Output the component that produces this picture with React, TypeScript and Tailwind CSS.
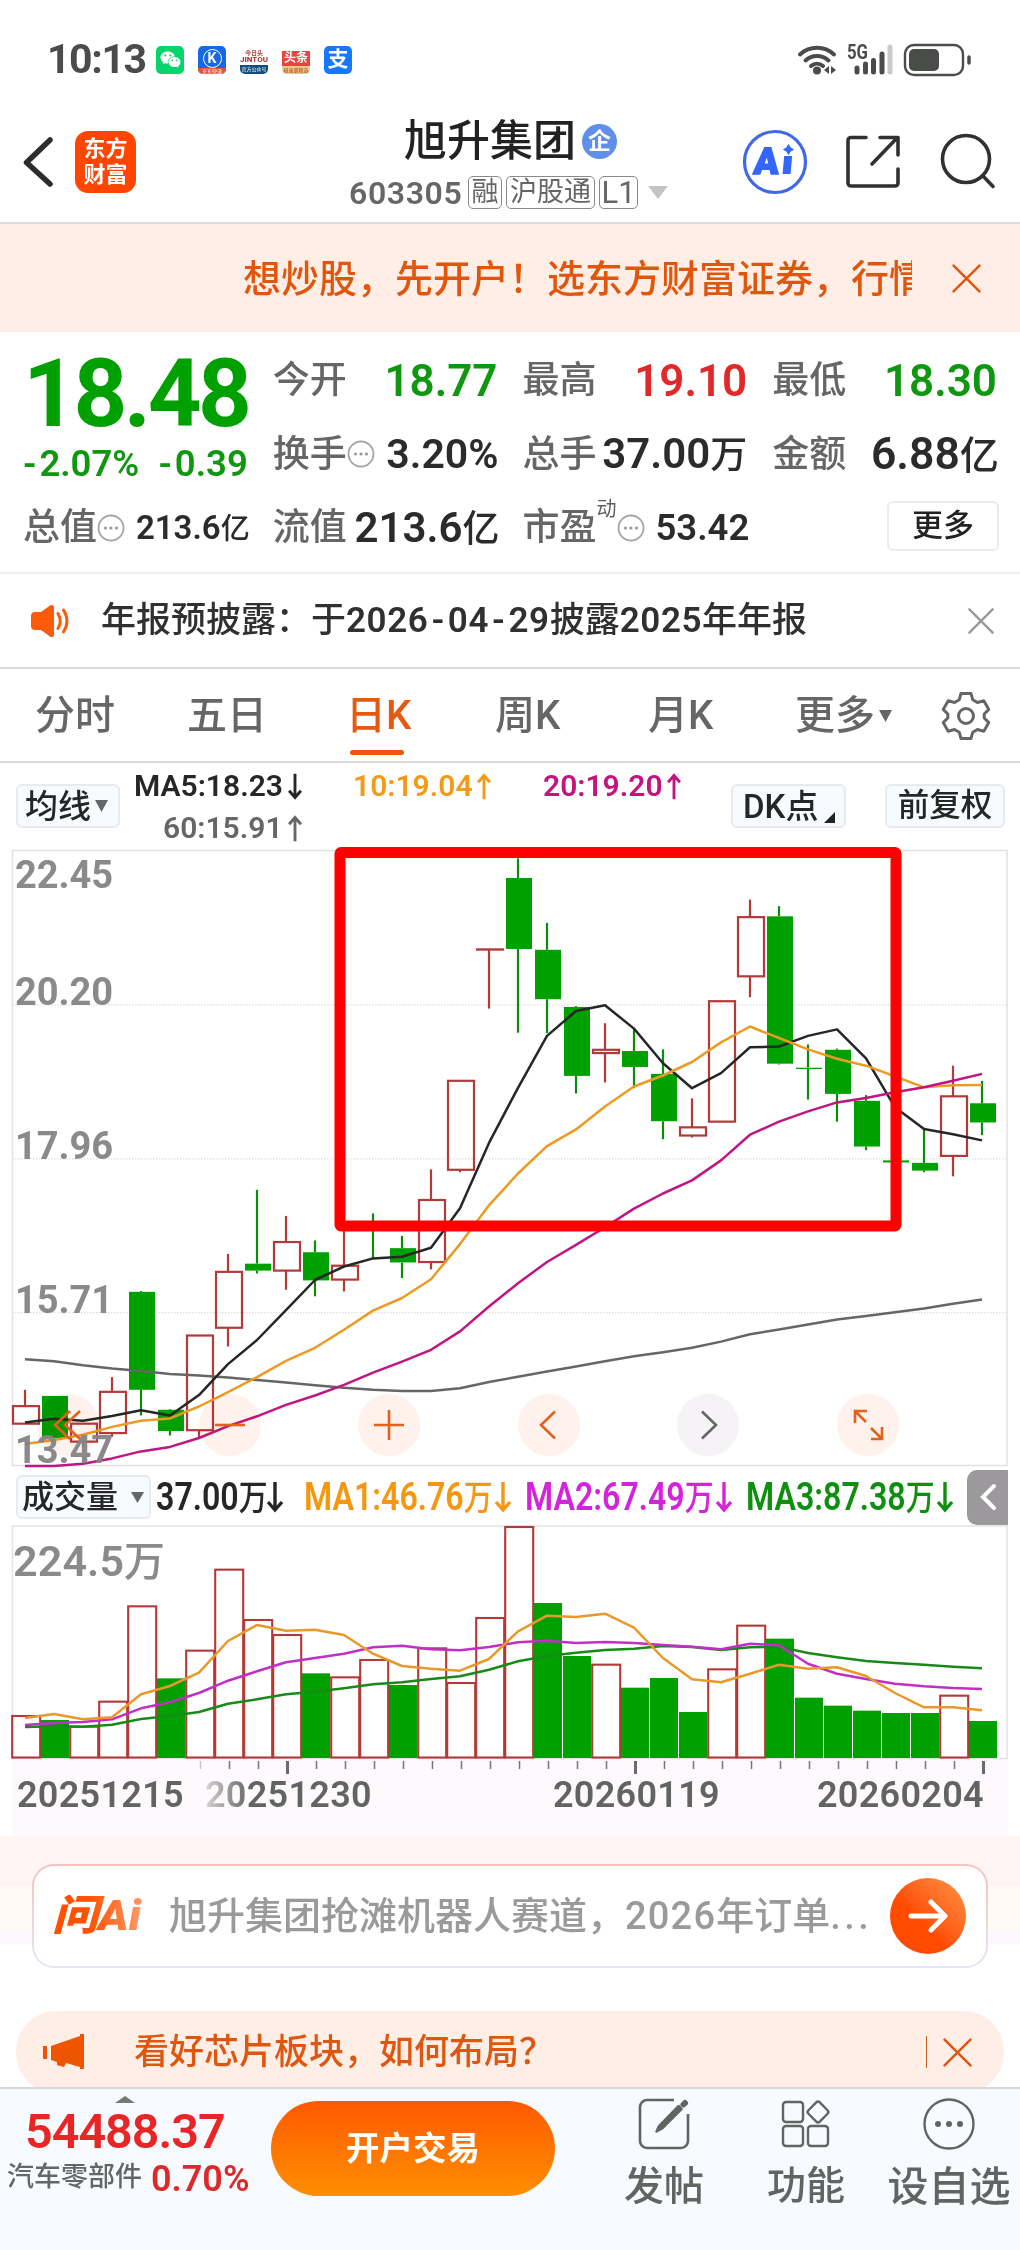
import React from 'react';
import { AiFillWechat } from 'react-icons/ai';

type Kind = 'up' | 'down';

// [kind, high, bodyTop, bodyBottom, low]
type Candle = [Kind, number, number, number, number];

const CANDLES: Candle[] = [
  ['up', 1347, 1387, 1430, 1430],
  ['down', 1362, 1362, 1465, 1465],
  ['up', 1430, 1430, 1474, 1490],
  ['up', 1316, 1352, 1453, 1462],
  ['down', 1105, 1107, 1347, 1410],
  ['down', 1394, 1396, 1448, 1459],
  ['up', 1214, 1214, 1446, 1465],
  ['up', 1014, 1058, 1195, 1241],
  ['down', 857, 1038, 1055, 1062],
  ['up', 921, 985, 1055, 1102],
  ['down', 981, 1010, 1079, 1118],
  ['up', 945, 1043, 1077, 1106],
  ['down', 915, 940, 955, 1025],
  ['down', 970, 1000, 1035, 1073],
  ['up', 807, 882, 1034, 1052],
  ['up', 590, 590, 808, 814],
  ['up', 268, 268, 268, 413],
  ['down', 45, 93, 267, 472],
  ['down', 203, 269, 390, 473],
  ['down', 407, 409, 578, 621],
  ['up', 449, 514, 522, 594],
  ['down', 460, 517, 556, 608],
  ['down', 513, 573, 689, 733],
  ['up', 633, 704, 724, 729],
  ['up', 395, 395, 690, 690],
  ['up', 146, 189, 334, 385],
  ['down', 162, 187, 548, 550],
  ['down', 501, 558, 561, 636],
  ['down', 511, 514, 622, 690],
  ['down', 625, 639, 751, 760],
  ['down', 780, 785, 790, 795],
  ['down', 705, 791, 810, 814],
  ['up', 553, 628, 774, 824],
  ['down', 590, 645, 692, 723],
];

const PRICE_LINES = [
  {
    color: '#666666',
    points: [1272, 1277, 1287, 1295, 1301, 1308, 1312, 1317, 1323, 1329, 1336, 1342, 1347, 1350, 1350, 1343, 1328, 1315, 1302, 1290, 1277, 1265, 1255, 1244, 1229, 1211, 1199, 1187, 1175, 1166, 1157, 1148, 1136, 1126],
  },
  {
    color: '#262626',
    points: [1427, 1418, 1423, 1411, 1397, 1410, 1360, 1284, 1225, 1152, 1078, 1045, 1025, 1021, 999, 902, 742, 607, 480, 419, 405, 462, 547, 608, 571, 508, 506, 480, 464, 535, 655, 708, 721, 736],
  },
  {
    color: '#ed9a22',
    points: [1480, 1470, 1457, 1438, 1423, 1417, 1388, 1353, 1316, 1276, 1244, 1200, 1153, 1122, 1076, 990, 895, 817, 750, 709, 653, 604, 577, 544, 496, 457, 485, 513, 536, 553, 579, 606, 601, 600],
  },
  {
    color: '#c01582',
    points: [1534, 1534, 1528, 1515, 1498, 1487, 1465, 1436, 1412, 1384, 1361, 1335, 1305, 1278, 1249, 1204, 1143, 1086, 1034, 992, 949, 903, 866, 834, 785, 722, 690, 665, 643, 632, 618, 606, 590, 573],
  },
];

const VOLUME_TOPS = [768, 780, 800, 725, 439, 655, 572, 329, 480, 525, 640, 652, 600, 675, 565, 669, 474, 201, 429, 588, 614, 683, 654, 756, 628, 497, 536, 713, 737, 752, 759, 759, 707, 783];

const FILLED_VOLUMES = [1, 5, 10, 13, 18, 19, 21, 22, 23, 26, 27, 28, 29, 30, 31, 33];

const VOLUME_LINES = [
  {
    color: '#178a17',
    points: [801, 799, 800, 794, 777, 768, 756, 731, 718, 703, 695, 685, 673, 667, 657, 649, 629, 604, 588, 578, 570, 566, 558, 561, 570, 562, 560, 579, 592, 603, 609, 614, 620, 625],
  },
  {
    color: '#c22fc6',
    points: [795, 789, 786, 778, 745, 727, 699, 662, 634, 607, 594, 581, 562, 557, 568, 571, 561, 547, 542, 549, 546, 549, 555, 560, 568, 551, 556, 611, 641, 657, 671, 679, 684, 687],
  },
  {
    color: '#e8992a',
    points: [774, 762, 778, 772, 703, 678, 638, 543, 495, 512, 509, 525, 581, 618, 626, 632, 597, 514, 467, 471, 461, 503, 594, 658, 667, 641, 614, 626, 622, 648, 699, 742, 742, 751],
  },
];

const GREEN = '#00a000';
const RED = '#b23a38';
const FONT = 'Roboto, "Noto Sans CJK SC", sans-serif';

const cx = (i: number) => 25 + i * 29;
const priceY = (v: number) => v / 2.45 - 6;
const volumeY = (v: number) => v / 3 - 64;

const toPath = (points: number[], y: (v: number) => number) =>
  points.map((v, i) => `${cx(i)},${y(v).toFixed(1)}`).join(' ');

const AXIS_LABELS = [
  { text: '22.45', y: 42 },
  { text: '20.20', y: 159 },
  { text: '17.96', y: 313 },
  { text: '15.71', y: 467 },
  { text: '13.47', y: 617 },
];

const PriceChart = () => (
  <svg width="1020" height="624" viewBox="0 0 1020 624" className="block">
    <rect x="12.5" y="4.5" width="994.5" height="615" fill="none" stroke="#e3e3e3" strokeWidth="1.6" />
    {[404, 781, 1158].map((v) => (
      <line key={v} x1="12" x2="1008" y1={priceY(v)} y2={priceY(v)} stroke="#dedede" strokeWidth="1.2" strokeDasharray="1.5 1.5" />
    ))}
    {CANDLES.map(([kind, high, top, bottom, low], i) => {
      const x = cx(i);
      const color = kind === 'up' ? RED : '#0c8c0c';
      return (
        <g key={i}>
          <line x1={x} x2={x} y1={priceY(high)} y2={priceY(top)} stroke={color} strokeWidth="2.2" />
          <line x1={x} x2={x} y1={priceY(bottom)} y2={priceY(low)} stroke={color} strokeWidth="2.2" />
          {kind === 'up' ? (
            <rect
              x={x - 12}
              y={priceY(top)}
              width="26"
              height={Math.max(priceY(bottom) - priceY(top), 0.2)}
              fill="none"
              stroke={RED}
              strokeWidth="2.2"
            />
          ) : (
            <rect x={x - 12} y={priceY(top)} width="26" height={priceY(bottom) - priceY(top)} fill={GREEN} />
          )}
        </g>
      );
    })}
    {PRICE_LINES.map((l) => (
      <polyline key={l.color} points={toPath(l.points, priceY)} fill="none" stroke={l.color} strokeWidth="2.5" strokeLinejoin="round" />
    ))}
    <rect x="340" y="6.5" width="556" height="373.5" rx="1" fill="none" stroke="#fe0000" strokeWidth="11" strokeLinejoin="round" />
  </svg>
);

const AxisLabels = () => (
  <svg width="140" height="624" viewBox="0 0 140 624" className="absolute left-0 top-0">
    {AXIS_LABELS.map((l) => (
      <text key={l.text} x="15" y={l.y} fontSize="38" fontWeight="700" fontFamily={FONT} fill="#858385" fillOpacity="0.95" textLength="98">
        {l.text}
      </text>
    ))}
  </svg>
);

const VolumeChart = () => (
  <svg width="1020" height="236" viewBox="0 0 1020 236" className="block">
    <rect x="12.5" y="2" width="994.5" height="232.5" fill="none" stroke="#e3e3e3" strokeWidth="1.6" />
    {VOLUME_TOPS.map((v, i) => {
      const x = cx(i);
      const h = volumeY(894) - volumeY(v);
      return FILLED_VOLUMES.includes(i) ? (
        <rect key={i} x={x - 13} y={volumeY(v)} width="28" height={h} fill={GREEN} />
      ) : (
        <rect key={i} x={x - 12.8} y={volumeY(v)} width="28" height={h - 0.5} fill="none" stroke={RED} strokeWidth="2.1" />
      );
    })}
    {VOLUME_LINES.map((l) => (
      <polyline key={l.color} points={toPath(l.points, volumeY)} fill="none" stroke={l.color} strokeWidth="2.5" strokeLinejoin="round" />
    ))}
    <text x="13" y="52" fontSize="43" fontWeight="500" fontFamily={FONT} fill="#8b898b">
      <tspan fontWeight="600" textLength="111">224.5</tspan>
      <tspan fontSize="41">万</tspan>
    </text>
  </svg>
);

const Ticks = () => (
  <svg width="1020" height="18" viewBox="0 0 1020 18" className="block">
    {CANDLES.map((_, i) => {
      if (i < 6) return null;
      const major = i % 12 === 9;
      return (
        <line
          key={i}
          x1={cx(i) + 1.5}
          x2={cx(i) + 1.5}
          y1="1"
          y2={major ? 14 : 9}
          stroke={major ? '#6b6b6b' : '#777777'}
          strokeOpacity={i === 6 ? 0.4 : 1}
          strokeWidth={major ? 3 : 1.5}
        />
      );
    })}
  </svg>
);

const Cross = ({ size, color, width }: { size: number; color: string; width: number }) => (
  <svg width={size} height={size} viewBox="0 0 28 28" fill="none" stroke={color} strokeWidth={width} strokeLinecap="round">
    <path d="M1.5 1.5l25 25M26.5 1.5l-25 25" />
  </svg>
);

const Dots = () => (
  <svg width="28" height="28" viewBox="0 0 28 28" fill="none" className="shrink-0">
    <circle cx="14" cy="14" r="12.5" stroke="#a5a5a5" strokeWidth="1.8" />
    <circle cx="8.5" cy="14" r="1.6" fill="#999" />
    <circle cx="14" cy="14" r="1.6" fill="#999" />
    <circle cx="19.5" cy="14" r="1.6" fill="#999" />
  </svg>
);

const Arrow = ({ up, className }: { up?: boolean; className?: string }) => (
  <svg width="18" height="32" viewBox="0 0 18 32" fill="none" stroke="currentColor" strokeWidth="3.4" className={className}>
    {up ? <path d="M9 31V3M2 11l7-8 7 8" /> : <path d="M9 1v28M2 21l7 8 7-8" />}
  </svg>
);

const StatusBar = () => (
  <div className="flex h-[90px] items-center pt-[29px]">
    <span className="ml-[47px] w-[109px] text-[41px] font-bold leading-none tracking-[-1.4px] text-[#4a4c49]">10:13</span>
    <div className="flex gap-[14px]">
      <div className="flex h-7 w-7 items-center justify-center rounded-[5px] bg-[#05d56a] text-white">
        <AiFillWechat size={23} />
      </div>
      <div className="relative flex h-7 w-7 justify-center overflow-hidden rounded-[5px] bg-[#1668e3] pt-[3px]">
        <div className="flex h-[19px] w-[19px] items-center justify-center rounded-full border border-white text-[14px] font-bold leading-none text-white">K</div>
        <div className="absolute bottom-0 left-0 h-[6px] w-full bg-[#e0523a] text-center text-[5px] leading-[6px] text-white">京东快递</div>
      </div>
      <div className="flex h-7 w-7 flex-col overflow-hidden rounded-[5px] text-center">
        <div className="h-[9px] pt-[4px] text-[6px] font-bold leading-[6px] text-[#b5413a]">今日头</div>
        <div className="h-[10px] text-[8px] font-bold leading-[10px] text-[#a8302a]">JINTOU</div>
        <div className="h-[9px] bg-[#124a80] text-[5px] leading-[9px] text-white">官方公众号</div>
      </div>
      <div className="flex h-7 w-7 flex-col pt-[5px] text-center">
        <div className="h-[15px] bg-[#e8443f] text-[12px] font-bold leading-[15px] text-white">头条</div>
        <div className="h-[8px] rounded-b-[5px] bg-[#f3c98c] text-[5px] leading-[8px] text-[#8a4a1a]">极速版精选</div>
      </div>
      <div className="flex h-7 w-7 items-center justify-center rounded-[5px] bg-[#1677ff] text-[21px] font-bold leading-none text-white">支</div>
    </div>
    <svg width="176" height="38" viewBox="0 -2 176 38" fill="none" className="ml-[445px]">
      <g stroke="#4a4c49" strokeWidth="4" strokeLinecap="round">
        <path d="M3 11.5a25 25 0 0 1 34 0M8.5 17.5a17 17 0 0 1 23 0M14 23a9.500 9.500 0 0 1 12 0" />
      </g>
      <circle cx="20" cy="27.500" r="4" fill="#4a4c49" />
      <path d="M32 23v8l-5-4zM34 23v8l5-4z" fill="#4a4c49" />
      <text x="50" y="16" fontSize="20.500" fontWeight="700" fontFamily={FONT} fill="#4a4c49" textLength="21" lengthAdjust="spacingAndGlyphs">5G</text>
      <g stroke="#4a4c49" strokeWidth="5" strokeLinecap="round">
        <path d="M60 25v4M68.500 21v8M76.500 17.500v11.500M85 11v18" />
        <path d="M93 4v25" stroke="#cbc9cc" />
      </g>
      <rect x="108" y="2" width="58" height="30" rx="9" stroke="#4a4c49" strokeWidth="2.400" />
      <rect x="112" y="6" width="30" height="22" rx="5" fill="#4a4c49" />
      <path d="M172 14v6" stroke="#4a4c49" strokeWidth="3.500" strokeLinecap="round" />
    </svg>
  </div>
);

const Tag = ({ className, children }: { className: string; children: React.ReactNode }) => (
  <span className={`flex h-[33px] items-center justify-center rounded-[5px] border-[1.500px] border-[#8a8a8a] leading-none text-[#666] ${className}`}>{children}</span>
);

const Header = () => (
  <header className="flex h-[134px] items-center border-b-2 border-[#dcdcdc] pt-[11px]">
    <svg width="32" height="52" viewBox="0 0 32 52" fill="none" className="ml-[22px]">
      <path d="M28 4L4.500 26.500 28 48" stroke="#2b2d2b" strokeWidth="5.500" strokeLinecap="round" strokeLinejoin="round" />
    </svg>
    <div className="ml-[21px] flex h-[62px] w-[61px] flex-col items-center justify-center rounded-[13px] bg-[#ff4500] text-[22px] font-bold leading-[26px] text-white">
      <span>东方</span>
      <span>财富</span>
    </div>
    <div className="ml-[213px] w-[330px]">
      <div className="ml-[55px] flex items-center gap-[6px]">
        <h1 className="text-[43px] font-medium leading-[54px] text-[#222]">旭升集团</h1>
        <span className="flex h-[35px] w-[35px] items-center justify-center rounded-full bg-[#5f8fe8] text-[23px] font-bold leading-none text-white">企</span>
      </div>
      <div className="mt-[8px] flex items-center">
        <span className="w-[119px] text-[32px] font-semibold leading-none tracking-[0.600px] text-[#666]">603305</span>
        <Tag className="w-[34px] text-[27px]">融</Tag>
        <Tag className="ml-[4px] w-[89px] text-[27px]">沪股通</Tag>
        <Tag className="ml-[4px] w-[39px] text-[31px]">L1</Tag>
        <svg width="20" height="13" viewBox="0 0 20 13" className="ml-[10px]">
          <path d="M0 0h20L10 13z" fill="#c4c4c4" />
        </svg>
      </div>
    </div>
    <svg width="66" height="66" viewBox="0 0 66 66" fill="none" className="ml-[63px]">
      <circle cx="33" cy="33" r="30.500" stroke="#4169e1" strokeWidth="3.200" />
      <g transform="translate(0 0) skewX(-5)">
        <text x="15" y="45" fontSize="37" fontWeight="900" fontFamily={FONT} fill="#3366ff" stroke="#3366ff" strokeWidth="1.600" textLength="25" lengthAdjust="spacingAndGlyphs">A</text>
        <path d="M44.500 27h8v18h-8z" fill="#3366ff" />
      </g>
      <path d="M46.500 15.500q1.200 4 5 5-3.800 1-5 5-1.200-4-5-5 3.800-1 5-5z" fill="#3366ff" stroke="#3366ff" />
    </svg>
    <svg width="54" height="54" viewBox="0 0 54 54" fill="none" stroke="#303230" strokeWidth="3.600" strokeLinecap="round" strokeLinejoin="round" className="ml-[38px]">
      <path d="M20 2.500H5A3 3 0 0 0 2 5.500V48a3 3 0 0 0 3 3H49a3 3 0 0 0 3-3V34M34 2.500H52V20M51 3L26 29" />
    </svg>
    <svg width="58" height="58" viewBox="0 0 58 58" fill="none" stroke="#303230" strokeWidth="3.600" strokeLinecap="round" className="ml-[39px]">
      <circle cx="27" cy="26" r="23.500" />
      <path d="M44 43l10 10.500" />
    </svg>
  </header>
);

const PromoBar = () => (
  <div className="flex h-[108px] items-center bg-[#ffeee6]">
    <div className="ml-[243px] w-[669px] overflow-hidden whitespace-nowrap pt-[2px] text-[38px] font-medium leading-[56px] text-[#e0560c]">
      想炒股，先开户！选东方财富证券，行情
    </div>
    <div className="ml-[40px]">
      <Cross size={29} color="#e0560c" width={2.4} />
    </div>
  </div>
);

const Label = ({ children }: { children: React.ReactNode }) => (
  <span className="text-[37px] font-medium leading-none text-[#666]">{children}</span>
);

const Unit = ({ children }: { children: React.ReactNode }) => <span className="text-[0.880em] font-medium">{children}</span>;

const Quote = () => (
  <section className="grid h-[242px] grid-cols-4 grid-rows-[73.500px_73.500px_73.500px] gap-x-[25px] border-b-2 border-[#eeeeee] px-[23px] pt-[12px] text-[#2b2b2b]">
    <div className="row-span-2 flex flex-col">
      <span className="mt-[2px] text-[94px] font-bold leading-[96px] tracking-[-3.500px] text-[#00a000]">18.48</span>
      <div className="mt-[4px] flex justify-between text-[36.500px] font-semibold leading-none text-[#0f970f]">
        <span><span className="pr-[3px]">-</span>2.07%</span>
        <span><span className="pr-[3px]">-</span>0.39</span>
      </div>
    </div>
    <div className="flex items-center justify-between">
      <Label>今开</Label>
      <span className="text-[44px] font-semibold leading-none text-[#0f970f]">18.77</span>
    </div>
    <div className="flex items-center justify-between">
      <Label>最高</Label>
      <span className="text-[44px] font-semibold leading-none text-[#e02a2a]">19.10</span>
    </div>
    <div className="flex items-center justify-between">
      <Label>最低</Label>
      <span className="text-[44px] font-semibold leading-none text-[#0f970f]">18.30</span>
    </div>
    <div className="flex items-center justify-between">
      <div className="flex items-center">
        <Label>换手</Label>
        <Dots />
      </div>
      <span className="-mr-[1px] text-[41px] font-semibold leading-none">3.20%</span>
    </div>
    <div className="flex items-center justify-between">
      <Label>总手</Label>
      <span className="text-[42px] font-semibold leading-none">37.00<Unit>万</Unit></span>
    </div>
    <div className="flex items-center justify-between">
      <Label>金额</Label>
      <span className="-mr-[2px] text-[44.500px] font-semibold leading-none">6.88<Unit>亿</Unit></span>
    </div>
    <div className="flex items-center justify-between">
      <div className="flex items-center">
        <Label>总值</Label>
        <Dots />
      </div>
      <span className="-mr-[2px] text-[33px] font-semibold leading-none">213.6<Unit>亿</Unit></span>
    </div>
    <div className="flex items-center justify-between">
      <Label>流值</Label>
      <span className="-mr-[2px] text-[42px] font-semibold leading-none">213.6<Unit>亿</Unit></span>
    </div>
    <div className="flex items-center justify-between">
      <div className="flex items-center">
        <Label>市盈</Label>
        <span className="-mt-[38px] text-[20px] leading-none text-[#5f5f5f]">动</span>
        <Dots />
      </div>
      <span className="-mr-[2px] text-[36.500px] font-semibold leading-none">53.42</span>
    </div>
    <div className="flex items-center justify-end">
      <button className="-mr-[2px] -mt-[4px] h-[50px] w-[112px] rounded-[6px] border-2 border-[#ebebeb] text-[31px] font-medium leading-none text-[#222]">更多</button>
    </div>
  </section>
);

const Announcement = () => (
  <div className="flex h-[95px] items-center border-b-2 border-[#d9d9d9]">
    <svg width="42" height="34" viewBox="0 0 42 34" fill="none" className="ml-[29px]">
      <path d="M2 12a4 4 0 0 1 4-4h6L21 1.500c2-1.300 4-.5 4 2v27c0 2.500-2 3.300-4 2L12 26H6a4 4 0 0 1-4-4z" fill="#fb5a0a" />
      <path d="M29 9.500q4.500 7.500 0 15M34.500 6q7 11 0 22" stroke="#fb5a0a" strokeWidth="3" strokeLinecap="round" />
    </svg>
    <p className="ml-[30px] w-[867px] whitespace-nowrap text-[35px] font-medium leading-none text-[#303030]">
      年报预披露：于
      <span className="font-semibold tracking-[0.600px]">
        2026<span className="px-[3px]">-</span>04<span className="px-[3px]">-</span>29
      </span>
      披露<span className="font-semibold tracking-[0.600px]">2025</span>年年报
    </p>
    <Cross size={26} color="#9a9a9a" width={2.6} />
  </div>
);

const TABS = [
  { label: '分时', className: 'ml-[35px] w-[152px]' },
  { label: '五日', className: 'w-[159px]' },
  { label: '日K', className: 'w-[149px]', active: true },
  { label: '周K', className: 'w-[153px]' },
  { label: '月K', className: 'w-[147px]' },
  { label: '更多', className: 'w-[84px]' },
];

const Tabs = () => (
  <nav className="flex h-[94px] items-center border-b-2 border-[#d9d9d9] pt-[1px] text-[40px] font-medium leading-none text-[#666]">
    {TABS.map((t) => (
      <div key={t.label} className={t.className}>
        {t.active ? (
          <span className="relative text-[#e55a0f]">
            {t.label}
            <i className="absolute -bottom-[16px] left-[4px] h-[5px] w-[54px] rounded-full bg-[#e55a0f]" />
          </span>
        ) : (
          t.label
        )}
      </div>
    ))}
    <svg width="13" height="12" viewBox="0 0 13 12">
      <path d="M0 0h13L6.500 12z" fill="#666" />
    </svg>
    <svg width="50" height="50" viewBox="0 0 50 50" fill="none" stroke="#666" strokeWidth="3" strokeLinejoin="round" className="ml-[49px]">
      <path d="M20 2.500h10l1.800 6.300 4.600 2.700 6.400-1.700 5 8.600-4.600 4.600v4l4.600 4.600-5 8.600-6.400-1.700-4.600 2.700L30 47.500H20l-1.800-6.300-4.600-2.700-6.400 1.700-5-8.600L6.800 27v-4l-4.600-4.600 5-8.600 6.400 1.700 4.600-2.700z" />
      <circle cx="25" cy="25" r="7.500" />
    </svg>
  </nav>
);

const Chip = ({ className, children }: { className: string; children: React.ReactNode }) => (
  <div className={`flex h-[44px] shrink-0 items-center whitespace-nowrap rounded-[6px] border-2 border-[#e8eaf0] bg-[#f7faff] font-medium leading-none text-[#262626] ${className}`}>
    {children}
  </div>
);

const MaRow = () => (
  <div className="flex h-[83px] items-start">
    <Chip className="ml-[16px] mt-[21px] w-[104px] pl-[7px] text-[33px]">
      均线
      <svg width="13" height="12" viewBox="0 0 13 12" className="ml-[4px]">
        <path d="M0 0h13L6.500 12z" fill="#666" />
      </svg>
    </Chip>
    <div className="ml-[14px] w-[597px] pt-[6px] text-[30px] font-semibold leading-none">
      <div className="flex h-[34px] items-center">
        <span className="w-[152px] text-[#262626]">MA5:18.23</span>
        <Arrow className="h-[27px] text-[#262626]" />
        <span className="ml-[49px] w-[122px] text-[#f59a16]">10:19.04</span>
        <Arrow up className="h-[27px] text-[#f59a16]" />
        <span className="ml-[50px] w-[122px] text-[#c4147f]">20:19.20</span>
        <Arrow up className="h-[27px] text-[#c4147f]" />
      </div>
      <div className="mt-[8px] flex h-[34px] items-center text-[#666]">
        <span className="ml-[29px] w-[123px]">60:15.91</span>
        <Arrow up className="h-[27px]" />
      </div>
    </div>
    <Chip className="mt-[21px] w-[115px] pl-[10px] text-[33px]">
      DK点
      <svg width="11" height="11" viewBox="0 0 11 11" className="ml-[6px] mt-[22px] shrink-0">
        <path d="M11 0v11H0z" fill="#222" />
      </svg>
    </Chip>
    <Chip className="ml-[39px] mt-[21px] w-[120px] justify-center text-[31.500px]">前复权</Chip>
  </div>
);

const ROUND_BUTTONS = [
  { d: 'M33 17L18 31l15 14M43 17L28 31l15 14', position: 'left-[37px]', fill: 'bg-[#fff1ec]', color: 'text-[#e0621c]' },
  { d: 'M16 31h30', position: 'left-[199px]', fill: 'bg-[#fff1ec]', color: 'text-[#e0621c]' },
  { d: 'M16 31h30M31 16v30', position: 'left-[358px]', fill: 'bg-[#fff1ec]', color: 'text-[#e0621c]' },
  { d: 'M37 17.500L23 31l14 13.500', position: 'left-[518px]', fill: 'bg-[#fff1ec]', color: 'text-[#e0621c]' },
  { d: 'M25 17.500L39 31 25 44.500', position: 'left-[677px]', fill: 'bg-[#f6f3f7]', color: 'text-[#666]' },
  { d: 'M30 17H18v12M18 17l11 11M34 45h11V33M45 45L34 34', position: 'left-[837px]', fill: 'bg-[#fff1ec]', color: 'text-[#e0621c]' },
];

const PricePanel = () => (
  <div className="relative">
    <PriceChart />
    {ROUND_BUTTONS.map((b) => (
      <div key={b.position} className={`absolute top-[548px] h-[62px] w-[62px] rounded-full mix-blend-multiply ${b.position} ${b.fill}`} />
    ))}
    {ROUND_BUTTONS.map((b) => (
      <svg
        key={b.position}
        width="62"
        height="62"
        viewBox="0 0 62 62"
        fill="none"
        stroke="currentColor"
        strokeWidth="2.600"
        className={`absolute top-[548px] ${b.position} ${b.color}`}
      >
        <path d={b.d} />
      </svg>
    ))}
    <AxisLabels />
  </div>
);

const VOLUME_STATS = [
  { text: '37.00', color: 'text-[#262626]', width: 'w-[148px]', label: 'w-[110px]' },
  { text: 'MA1:46.76', color: 'text-[#f7960f]', width: 'w-[221px]', label: 'w-[190px]' },
  { text: 'MA2:67.49', color: 'text-[#d424da]', width: 'w-[221px]', label: 'w-[190px]' },
  { text: 'MA3:87.38', color: 'text-[#0f8f0f]', width: 'w-[221px]', label: 'w-[190px]' },
];

const VolumeHeader = () => (
  <div className="flex h-[54px] items-center">
    <Chip className="ml-[16px] mr-[5px] w-[135px] pl-[4px] text-[32px]">
      成交量
      <svg width="13" height="11" viewBox="0 0 13 11" className="ml-[13px]">
        <path d="M0 0h13L6.500 11z" fill="#666" />
      </svg>
    </Chip>
    {VOLUME_STATS.map((s) => (
      <div key={s.text} className={`flex shrink-0 items-center leading-none ${s.width} ${s.color}`}>
        <span className={`shrink-0 ${s.label}`}>
          <span className="inline-block origin-left scale-x-[0.825] whitespace-nowrap text-[39px] font-semibold">
            {s.text}
            <span className="text-[35px] font-medium">万</span>
          </span>
        </span>
        <Arrow className="shrink-0" />
      </div>
    ))}
    <button className="flex h-[55px] w-[41px] shrink-0 items-center justify-center rounded-l-[10px] bg-[#9b999b]">
      <svg width="18" height="28" viewBox="0 0 18 28" fill="none" stroke="#fff" strokeWidth="4" strokeLinecap="round">
        <path d="M15 3L4 14l11 11" />
      </svg>
    </button>
  </div>
);

const DateAxis = () => (
  <div className="h-[76px] bg-white px-[12px]">
    <div className="h-full bg-[#fdf9fd]">
      <div className="-ml-[12px]">
        <Ticks />
      </div>
      <div className="-mt-[1px] flex text-[36px] font-semibold leading-[36px] tracking-[0.300px] text-[#626462]">
        <span className="ml-[5px] w-[188px]">20251215</span>
        <span className="w-[348px] bg-linear-to-r from-[#d8d6d8] to-[#626462] to-[13%] bg-clip-text text-transparent">20251230</span>
        <span className="w-[264px]">20260119</span>
        <span>20260204</span>
      </div>
    </div>
  </div>
);

const AskAi = () => (
  <section className="h-[175px] bg-[linear-gradient(#fff5f4_50px,#fffaf4_50px,#fffaf4_94px,#fdf8fd_94px,#fdf8fd_108px,#fff_108px)] px-[32px] pt-[28px]">
    <div className="h-[104px] rounded-[22px] bg-linear-to-b from-[#f5c3ba] to-[#e3e6f6] p-[2px]">
      <div className="flex h-full items-center rounded-[20px] bg-white">
        <svg width="90" height="42" viewBox="0 0 90 42" className="ml-[19px]">
          <defs>
            <linearGradient id="ask" x1="0" x2="1">
              <stop offset="0.400" stopColor="#ff5200" />
              <stop offset="1" stopColor="#ff9a6b" />
            </linearGradient>
          </defs>
          <text x="-1" y="35" fontSize="42" fontWeight="900" fontStyle="italic" fontFamily={FONT} fill="url(#ask)" textLength="89" lengthAdjust="spacingAndGlyphs">问Ai</text>
        </svg>
        <p className="ml-[26px] w-[721px] whitespace-nowrap text-[38px] font-medium leading-[56px] text-[#9b999b]">
          旭升集团抢滩机器人赛道，<span className="tracking-[1.200px]">2026</span>年订单<span className="tracking-[3.500px]">...</span>
        </p>
        <div className="flex h-[76px] w-[76px] shrink-0 items-center justify-center rounded-full bg-linear-to-tr from-[#ff4b00] from-40% to-[#ff9140]">
          <svg width="40" height="34" viewBox="0 0 40 34" fill="none" stroke="#fff" strokeWidth="5" strokeLinecap="round" strokeLinejoin="round">
            <path d="M3 17h33M23 3l14 14-14 14" />
          </svg>
        </div>
      </div>
    </div>
  </section>
);

const TopicBanner = () => (
  <div className="h-[76px] overflow-hidden px-[16px]">
    <div className="flex h-[82px] items-center rounded-[40px] bg-[#ffeee6]">
      <svg width="42" height="36" viewBox="0 0 42 36" fill="#ee5500" className="ml-[27px]">
        <path d="M0 12h4v13H0zM8 12L37 2V0h4v35h-4v-2l-14-4-2 4-7-2v-3l-6-2z" />
      </svg>
      <p className="ml-[49px] w-[792px] text-[35px] font-medium leading-none text-[#dd5710]">看好芯片板块，如何布局？</p>
      <i className="mr-[16px] h-[32px] w-px bg-[#c9621f]" />
      <Cross size={29} color="#dd5710" width={2.4} />
    </div>
  </div>
);

const BottomBar = () => (
  <footer className="flex h-[163px] items-start border-t-2 border-[#d6d8de] bg-[#f7faff]">
    <div className="flex w-[271px] flex-col pt-[7px]">
      <svg width="20" height="7" viewBox="0 0 20 7" className="ml-[115px]">
        <path d="M0 7h20L10 0z" fill="#777" />
      </svg>
      <span className="ml-[25px] mt-[4px] text-[48.500px] font-semibold leading-[50px] tracking-[-1px] text-[#e82626]">54488.37</span>
      <div className="ml-[7px] mt-[4px] flex items-center leading-none">
        <span className="-mt-[3px] w-[144px] text-[27px] font-medium text-[#666]">汽车零部件</span>
        <span className="text-[36px] font-semibold text-[#dc2a2a]">0.70%</span>
      </div>
    </div>
    <button className="mt-[12px] h-[95px] w-[284px] rounded-full bg-linear-to-b from-[#ff5800] to-[#ff8e00] text-[33.500px] font-bold leading-none text-white">
      开户交易
    </button>
    <div className="ml-[64px] flex w-[90px] flex-col items-center pt-[9px] text-[40px] font-medium text-[#626462]">
      <svg width="52" height="52" viewBox="0 0 52 52" fill="none" stroke="#626462" strokeWidth="2.600">
        <path d="M36 2H9a7 7 0 0 0-7 7v34a7 7 0 0 0 7 7h34a7 7 0 0 0 7-7V16" />
        <path d="M40.500 8L43.500 11 24 30.500 18.500 33.500 21 28z" fill="#626462" stroke="#626462" strokeWidth="2.500" strokeLinejoin="round" />
        <path d="M45.500 6.500l1.500-1.500" strokeWidth="6" strokeLinecap="round" />
      </svg>
      <span className="mt-[15px] leading-[44px]">发帖</span>
    </div>
    <div className="ml-[52px] flex w-[90px] flex-col items-center pt-[9px] text-[39px] font-medium text-[#626462]">
      <svg width="52" height="52" viewBox="0 0 52 52" fill="none" stroke="#626462" strokeWidth="2.400">
        <rect x="3" y="4" width="20" height="20" rx="3" />
        <rect x="3" y="28" width="20" height="20" rx="3" />
        <rect x="28" y="28" width="20" height="20" rx="3" />
        <rect x="30" y="6" width="16" height="16" rx="2.500" transform="rotate(45 38 14)" />
      </svg>
      <span className="mt-[14px] leading-[44px]">功能</span>
    </div>
    <div className="ml-[33px] flex w-[130px] flex-col items-center pt-[8px] text-[41px] font-medium text-[#626462]">
      <svg width="54" height="54" viewBox="0 0 54 54" fill="none">
        <circle cx="27" cy="27" r="24.500" stroke="#626462" strokeWidth="2.400" />
        <circle cx="16" cy="27" r="3" fill="#626462" />
        <circle cx="27" cy="27" r="3" fill="#626462" />
        <circle cx="38" cy="27" r="3" fill="#626462" />
      </svg>
      <span className="mt-[14px] whitespace-nowrap leading-[44px]">设自选</span>
    </div>
  </footer>
);

export default function App() {
  return (
    <div className="h-[2250px] w-[1020px] overflow-hidden bg-white font-[Roboto,'Noto_Sans_CJK_SC',sans-serif]">
      <StatusBar />
      <Header />
      <PromoBar />
      <Quote />
      <Announcement />
      <Tabs />
      <MaRow />
      <PricePanel />
      <VolumeHeader />
      <VolumeChart />
      <DateAxis />
      <AskAi />
      <TopicBanner />
      <BottomBar />
    </div>
  );
}
